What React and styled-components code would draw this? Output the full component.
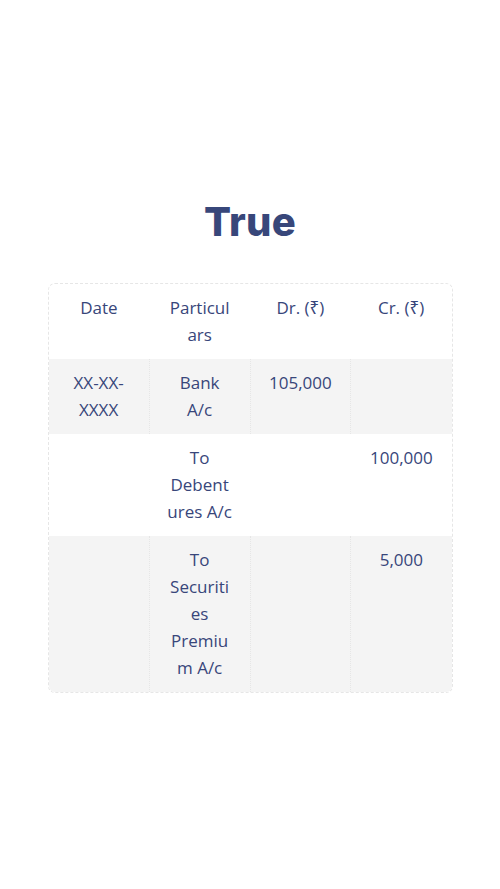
import styled, { createGlobalStyle } from "styled-components";

const GlobalStyle = createGlobalStyle`
  html, body {
    margin: 0;
    padding: 0;
    background: #ffffff;
  }
`;

const rows = [
  { date: "XX-XX-XXXX", particulars: "Bank A/c", dr: "105,000", cr: "" },
  { date: "", particulars: "To Debentures A/c", dr: "", cr: "100,000" },
  { date: "", particulars: "To Securities Premium A/c", dr: "", cr: "5,000" },
];

const App = () => {
  return (
    <>
      <GlobalStyle />
      <Page>
        <Title>True</Title>
        <TableWrap>
          <Table>
            <thead>
              <tr>
                <Th>Date</Th>
                <Th>Particulars</Th>
                <Th>Dr. (₹)</Th>
                <Th>Cr. (₹)</Th>
              </tr>
            </thead>
            <tbody>
              {rows.map((row, i) => (
                <Row key={i} $shaded={i % 2 === 0}>
                  <Td>{row.date}</Td>
                  <Td>{row.particulars}</Td>
                  <Td>{row.dr}</Td>
                  <Td>{row.cr}</Td>
                </Row>
              ))}
            </tbody>
          </Table>
        </TableWrap>
      </Page>
    </>
  );
};
export default App;

const Page = styled.main`
  width: 500px;
  min-height: 889px;
  box-sizing: border-box;
  padding-top: 197px;
  display: flex;
  flex-direction: column;
  align-items: center;
`;

const Title = styled.h1`
  margin: 0;
  font-family: Inter, "Noto Sans", sans-serif;
  font-weight: 800;
  font-size: 40px;
  line-height: 50px;
  letter-spacing: 0.3px;
  color: #38477a;
`;

const TableWrap = styled.div`
  margin-top: 36px;
  width: 405px;
  border: 1px dashed #e6e6e6;
  border-radius: 7px;
  overflow: hidden;
  box-sizing: border-box;
`;

const Table = styled.table`
  width: 100%;
  border-collapse: collapse;
  table-layout: fixed;
  font-family: "Open Sans", "Noto Sans", sans-serif;
  font-size: 17px;
  line-height: 27px;
  color: #38467a;
`;

const Th = styled.th`
  font-weight: 400;
  text-align: center;
  vertical-align: top;
  padding: 10px 17px 11px;
  overflow-wrap: anywhere;
`;

const Row = styled.tr`
  background: ${({ $shaded }) => ($shaded ? "#f4f4f4" : "#ffffff")};

  td + td {
    border-left: 1px dotted
      ${({ $shaded }) => ($shaded ? "#e6e6e6" : "transparent")};
  }
`;

const Td = styled.td`
  text-align: center;
  vertical-align: top;
  padding: 10px 17px 11px;
  overflow-wrap: anywhere;
`;
